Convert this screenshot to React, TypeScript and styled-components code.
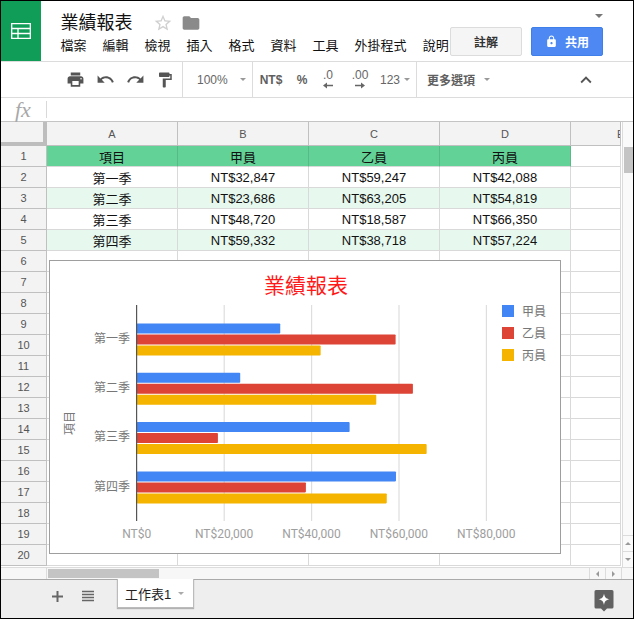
import React from 'react';
import styled, { createGlobalStyle } from 'styled-components';
import { MdPrint, MdUndo, MdRedo, MdFormatPaint, MdFolder, MdLock, MdExpandLess, MdViewHeadline, MdStarBorder } from 'react-icons/md';

const SANS = `"Liberation Sans", "Noto Sans CJK TC", sans-serif`;

const Global = createGlobalStyle`
  * { box-sizing: border-box; }
  html, body { margin: 0; padding: 0; background: #fff; }
  body { font-family: ${SANS}; }
`;

const Frame = styled.div`
  width: 634px; height: 619px; border: 1px solid #000; background: #fff;
  display: flex; flex-direction: column; overflow: hidden; position: relative;
`;
const Header = styled.header`
  height: 61px; flex: none; display: flex; border-bottom: 1px solid #dcdcdc;
`;
const Logo = styled.div`
  width: 40px; height: 60px; background: #0f9d58; display: flex; align-items: center; justify-content: center;
`;
const TitleColumn = styled.div`
  width: 409px; padding-left: 19.5px; display: flex; flex-direction: column;
`;
const TitleRow = styled.div`
  height: 36px; padding-top: 7px; display: flex; align-items: center;
`;
const DocTitle = styled.div`
  font-size: 18px; line-height: 24px; color: #111; width: 92.5px;
`;
const FolderSlot = styled.div`
  margin-left: 8px; display: flex;
`;
const MenuBar = styled.nav`
  display: flex; gap: 16px; font-size: 13px; line-height: 18px; color: #111;
`;
const Actions = styled.div`
  display: flex; flex-direction: column; align-items: flex-end; padding-top: 13px;
`;
const Row = styled.div`
  display: flex; gap: 9px; margin-top: 9px;
`;
const Caret = styled.span<{ $c?: string; $s?: number; $ml?: number }>`
  display: inline-block; width: 0; height: 0; flex: none;
  margin-left: ${p => p.$ml ?? 0}px;
  border-left: ${p => p.$s ?? 3.5}px solid transparent;
  border-right: ${p => p.$s ?? 3.5}px solid transparent;
  border-top: ${p => p.$s ?? 3.5}px solid ${p => p.$c ?? '#999'};
`;
const Btn = styled.div<{ $primary?: boolean }>`
  width: 72px; height: 29px; border-radius: 2px; display: flex; align-items: center; justify-content: center; gap: 7px;
  font-size: 12px; font-weight: 700;
  background: ${p => (p.$primary ? '#4d88f3' : '#f5f5f5')};
  border: 1px solid ${p => (p.$primary ? '#3f7fe9' : '#dcdcdc')};
  color: ${p => (p.$primary ? '#fff' : '#333')};
`;
const Toolbar = styled.div`
  height: 36px; flex: none; display: flex; align-items: stretch; padding-left: 59px; border-bottom: 1px solid #dcdcdc;
  color: #666;
`;
const Tool = styled.div<{ $w: number; $pl?: number }>`
  width: ${p => p.$w}px; flex: none; display: flex; align-items: center; gap: 6px;
  justify-content: ${p => (p.$pl !== undefined ? 'flex-start' : 'center')};
  padding-left: ${p => p.$pl ?? 0}px;
  font-size: 12px; color: #555; white-space: nowrap;
`;
const ToolText = styled.span<{ $bold?: boolean }>`
  font-weight: ${p => (p.$bold ? 700 : 400)};
  color: ${p => (p.$bold ? '#5f5f5f' : '#666')};
`;
const ToolSep = styled.div`
  width: 1px; background: #dcdcdc; flex: none;
`;
const Decimal = styled.div`
  display: flex; flex-direction: column; align-items: center; font-size: 12px; color: #666; line-height: 13px;
  height: 22px;
`;
const Formula = styled.div`
  height: 24px; flex: none; display: flex; align-items: center; border-bottom: 1px solid #c4c4c4;
`;
const Fx = styled.i`
  width: 45px; padding-left: 14px; font-family: "Liberation Serif", serif; font-size: 22px; color: #a8a8a8; line-height: 20px;
`;
const FxSep = styled.div`
  width: 1px; height: 17px; background: #d9d9d9;
`;
const SheetArea = styled.div`
  height: 445px; flex: none; display: flex; position: relative;
`;
const Grid = styled.div`
  width: 621px; height: 445px; flex: none; overflow: hidden; display: grid;
  grid-template-columns: 46px repeat(4, 131px) 50px;
  grid-template-rows: 24px repeat(20, 21px) 1fr;
`;
const Corner = styled.div`
  background: #f3f3f3; border-right: 4px solid #bdbdbd; border-bottom: 4px solid #bdbdbd;
`;
const ColHead = styled.div<{ $clip?: boolean }>`
  background: #f3f3f3; border-right: 1px solid #c0c0c0; border-bottom: 1px solid #c0c0c0;
  font-size: 11px; color: #555; display: flex; align-items: center; overflow: hidden;
  justify-content: ${p => (p.$clip ? 'flex-start' : 'center')};
  padding-left: ${p => (p.$clip ? '46px' : '0')};
`;
const RowHead = styled.div`
  background: #f3f3f3; border-right: 1px solid #c0c0c0; border-bottom: 1px solid #c0c0c0;
  font-size: 11px; color: #555; display: flex; align-items: center; justify-content: center;
`;
const Cell = styled.div<{ $fill?: 'head' | 'band' }>`
  display: flex; align-items: center; justify-content: center; font-size: 13px; color: #111;
  background: ${p => (p.$fill === 'head' ? '#63d297' : p.$fill === 'band' ? '#e7f9ef' : '#fff')};
  border-right: 1px solid ${p => (p.$fill === 'head' ? '#58bb87' : '#d9d9d9')};
  border-bottom: 1px solid #d9d9d9;
`;
const VScroll = styled.div`
  width: 11px; flex: none; border-left: 1px solid #dcdcdc; background: #fafafa; display: flex; flex-direction: column; padding-top: 25px;
`;
const VThumb = styled.div`
  height: 26px; width: 9px; margin-left: 1px; background: #c4c4c4;
`;
const VButtons = styled.div`
  margin-top: auto; display: flex; flex-direction: column;
`;
const VBtn = styled.div`
  height: 16px; display: flex; align-items: center; justify-content: center; border-top: 1px solid #dcdcdc;
`;
const CaretUp = styled.span`
  display: inline-block; width: 0; height: 0;
  border-left: 3px solid transparent; border-right: 3px solid transparent; border-bottom: 3px solid #999;
`;
const CaretSide = styled.span<{ $dir: 'l' | 'r' }>`
  display: inline-block; width: 0; height: 0;
  border-top: 3px solid transparent; border-bottom: 3px solid transparent;
  ${p => (p.$dir === 'l' ? 'border-right: 3px solid #999;' : 'border-left: 3px solid #999;')}
`;
const HScroll = styled.div`
  height: 12px; flex: none; display: flex; background: #f7f7f7; border-top: 1px solid #dcdcdc; position: relative;
`;
const HGutter = styled.div`
  width: 46px; flex: none; border-right: 1px solid #dcdcdc;
`;
const HThumb = styled.div`
  width: 111px; height: 9px; margin: 1px 0 0 1px; background: #c4c4c4;
`;
const HBtns = styled.div`
  margin-left: auto; display: flex; width: 44px;
`;
const HBtn = styled.div`
  width: 16px; flex: none; display: flex; align-items: center; justify-content: center; border-left: 1px solid #dcdcdc;
`;
const HEnd = styled(HBtn)`
  width: 12px;
`;
const TabBar = styled.div`
  flex: 1; background: #eeeeee; border-top: 1px solid #aaa; display: flex; position: relative;
`;
const TabIcon = styled.div<{ $w: number; $ml?: number }>`
  width: ${p => p.$w}px; flex: none; height: 28px; margin-top: 2px; margin-left: ${p => p.$ml ?? 0}px;
  display: flex; align-items: center; justify-content: center; color: #666;
`;
const Tab = styled.div`
  width: 77px; height: 29px; margin-top: -1px; margin-left: 7px; background: #fff; border: 1px solid #bbb; border-top: none;
  box-shadow: 0 1px 1px rgba(0,0,0,.25); display: flex; align-items: center; padding-left: 7px; gap: 7px; font-size: 13px; color: #222;
`;
const Explore = styled.div`
  margin-left: auto; margin-right: 19px; margin-top: 9px; width: 20px; height: 24px;
`;
const ChartBox = styled.div`
  position: absolute; left: 48px; top: 138px; width: 512px; height: 294px; background: #fff; border: 1px solid #9e9e9e;
`;
const ChartSvg = styled.svg`
  display: block; width: 510px; height: 292px;
`;
const Title = styled.text`
  font-family: "Noto Sans CJK TC", sans-serif; font-size: 21px; fill: #ff1a1a;
`;
const CatLabel = styled.text`
  font-family: "Noto Sans CJK TC", sans-serif; font-size: 12px; fill: #777;
`;
const AxisLabel = styled.text`
  font-family: Roboto, sans-serif; font-size: 12px; fill: #9e9e9e;
`;

const table = [
  ['項目', '甲員', '乙員', '丙員'],
  ['第一季', 'NT$32,847', 'NT$59,247', 'NT$42,088'],
  ['第二季', 'NT$23,686', 'NT$63,205', 'NT$54,819'],
  ['第三季', 'NT$48,720', 'NT$18,587', 'NT$66,350'],
  ['第四季', 'NT$59,332', 'NT$38,718', 'NT$57,224'],
];
const series = [
  { name: '甲員', color: '#4285f4', values: [32847, 23686, 48720, 59332] },
  { name: '乙員', color: '#dd4436', values: [59247, 63205, 18587, 38718] },
  { name: '丙員', color: '#f4b400', values: [42088, 54819, 66350, 57224] },
];
const quarters = ['第一季', '第二季', '第三季', '第四季'];
const X0 = 136.7;
const SCALE = 87.4 / 20000;

function Chart() {
  return (
    <ChartBox>
      <ChartSvg viewBox="50 261 510 292">
        <Title x={306} y={293} textAnchor="middle">業績報表</Title>
        {[1, 2, 3, 4].map(i => (
          <rect key={i} x={X0 + i * 87.4 - 0.5} y={305} width={1.2} height={216} fill="#dedede" />
        ))}
        {quarters.map((q, i) => (
          <g key={q}>
            <CatLabel x={130} y={342.5 + i * 49.4} textAnchor="end">{q}</CatLabel>
            {series.map((s, j) => (
              <rect key={s.name} x={X0} y={323.5 + i * 49.3 + j * 11} width={s.values[i] * SCALE} height={10} rx={0.8} fill={s.color} />
            ))}
          </g>
        ))}
        <rect x={136} y={305} width={1.2} height={216} fill="#555" />
        {['NT$0', 'NT$20,000', 'NT$40,000', 'NT$60,000', 'NT$80,000'].map((t, i) => (
          <AxisLabel key={t} x={X0 + i * 87.4} y={538} textAnchor="middle">{t}</AxisLabel>
        ))}
        <CatLabel transform="translate(74 423) rotate(-90)" textAnchor="middle">項目</CatLabel>
        {series.map((s, i) => (
          <g key={s.name}>
            <rect x={502} y={305 + i * 22} width={12} height={12} fill={s.color} />
            <CatLabel x={522} y={315.5 + i * 22}>{s.name}</CatLabel>
          </g>
        ))}
      </ChartSvg>
    </ChartBox>
  );
}

function ArrowGlyph({ dir }: { dir: 'l' | 'r' }) {
  return (
    <svg width="12" height="7" viewBox="0 0 12 7">
      {dir === 'l'
        ? <path d="M1 3.5 L5 0.5 V2.7 H11 V4.3 H5 V6.5 Z" fill="#666" />
        : <path d="M11 3.5 L7 0.5 V2.7 H1 V4.3 H7 V6.5 Z" fill="#666" />}
    </svg>
  );
}

export default function App() {
  const colLetters = ['A', 'B', 'C', 'D'];
  return (
    <>
      <Global />
      <Frame>
        <Header>
          <Logo>
            <svg width="20" height="16" viewBox="0 0 20 16">
              <path d="M0.7 0.7H19.3V15.3H0.7Z M0.7 5.5H19.3 M0.7 10.5H19.3 M7 5.5V15.3" fill="none" stroke="#fff" strokeWidth="1.3" />
            </svg>
          </Logo>
          <TitleColumn>
            <TitleRow>
              <DocTitle>業績報表</DocTitle>
              <MdStarBorder size={20} color="#d0d0d0" />
              <FolderSlot><MdFolder size={20} color="#8a8a8a" /></FolderSlot>
            </TitleRow>
            <MenuBar>
              {['檔案', '編輯', '檢視', '插入', '格式', '資料', '工具', '外掛程式', '說明'].map(m => (
                <span key={m}>{m}</span>
              ))}
            </MenuBar>
          </TitleColumn>
          <Actions>
            <Caret $c="#777" $s={4} />
            <Row>
              <Btn>註解</Btn>
              <Btn $primary><MdLock size={13} />共用</Btn>
            </Row>
          </Actions>
        </Header>
        <Toolbar>
          <Tool $w={30}><MdPrint size={19} /></Tool>
          <Tool $w={30}><MdUndo size={19} /></Tool>
          <Tool $w={30}><MdRedo size={19} /></Tool>
          <Tool $w={30}><MdFormatPaint size={18} /></Tool>
          <Tool $w={2} />
          <ToolSep />
          <Tool $w={69} $pl={14}><ToolText>100%</ToolText><Caret $s={3} $ml={6} /></Tool>
          <ToolSep />
          <Tool $w={36}><ToolText $bold>NT$</ToolText></Tool>
          <Tool $w={26}><ToolText $bold>%</ToolText></Tool>
          <Tool $w={26}><Decimal>.0<ArrowGlyph dir="l" /></Decimal></Tool>
          <Tool $w={38}><Decimal>.00<ArrowGlyph dir="r" /></Decimal></Tool>
          <Tool $w={37} $pl={1}><ToolText>123</ToolText><Caret $s={3} $ml={-2} /></Tool>
          <ToolSep />
          <Tool $w={80} $pl={10}><ToolText $bold>更多選項</ToolText><Caret $s={3} $ml={3} /></Tool>
          <Tool $w={178}><MdExpandLess size={22} /></Tool>
        </Toolbar>
        <Formula>
          <Fx>fx</Fx>
          <FxSep />
        </Formula>
        <SheetArea>
          <Grid>
            <Corner />
            {colLetters.map(c => <ColHead key={c}>{c}</ColHead>)}
            <ColHead $clip>E</ColHead>
            {Array.from({ length: 20 }, (_, r) => (
              <React.Fragment key={r}>
                <RowHead>{r + 1}</RowHead>
                {[0, 1, 2, 3].map(c => (
                  <Cell key={c} $fill={r === 0 ? 'head' : r < 5 && r % 2 === 0 ? 'band' : undefined}>
                    {r < 5 ? table[r][c] : ''}
                  </Cell>
                ))}
                <Cell />
              </React.Fragment>
            ))}
          </Grid>
          <VScroll>
            <VThumb />
            <VButtons>
              <VBtn><CaretUp /></VBtn>
              <VBtn><Caret $s={3} /></VBtn>
            </VButtons>
          </VScroll>
          <Chart />
        </SheetArea>
        <HScroll>
          <HGutter />
          <HThumb />
          <HBtns>
            <HBtn><CaretSide $dir="l" /></HBtn>
            <HBtn><CaretSide $dir="r" /></HBtn>
            <HEnd />
          </HBtns>
        </HScroll>
        <TabBar>
          <TabIcon $w={40} $ml={36}>
            <svg width="11" height="11" viewBox="0 0 11 11"><path d="M4.5 0H6.5V4.5H11V6.5H6.5V11H4.5V6.5H0V4.5H4.5Z" fill="#666" /></svg>
          </TabIcon>
          <TabIcon $w={22}><MdViewHeadline size={18} /></TabIcon>
          <TabIcon $w={11} />
          <Tab>工作表1<Caret $s={3.5} $c="#aaa" /></Tab>
          <Explore>
            <svg width="20" height="24" viewBox="0 0 20 24">
              <path d="M2 1H18A1.5 1.5 0 0 1 19.5 2.5V18A1.5 1.5 0 0 1 18 19.5H13L10 22.5L7 19.5H2A1.5 1.5 0 0 1 .5 18V2.5A1.5 1.5 0 0 1 2 1Z" fill="#616161" />
              <path d="M10 4.5C10.6 8.2 11.8 9.6 15.5 10.3C11.8 11 10.6 12.4 10 16C9.4 12.4 8.2 11 4.5 10.3C8.2 9.6 9.4 8.2 10 4.5Z" fill="#fff" />
            </svg>
          </Explore>
        </TabBar>
      </Frame>
    </>
  );
}
